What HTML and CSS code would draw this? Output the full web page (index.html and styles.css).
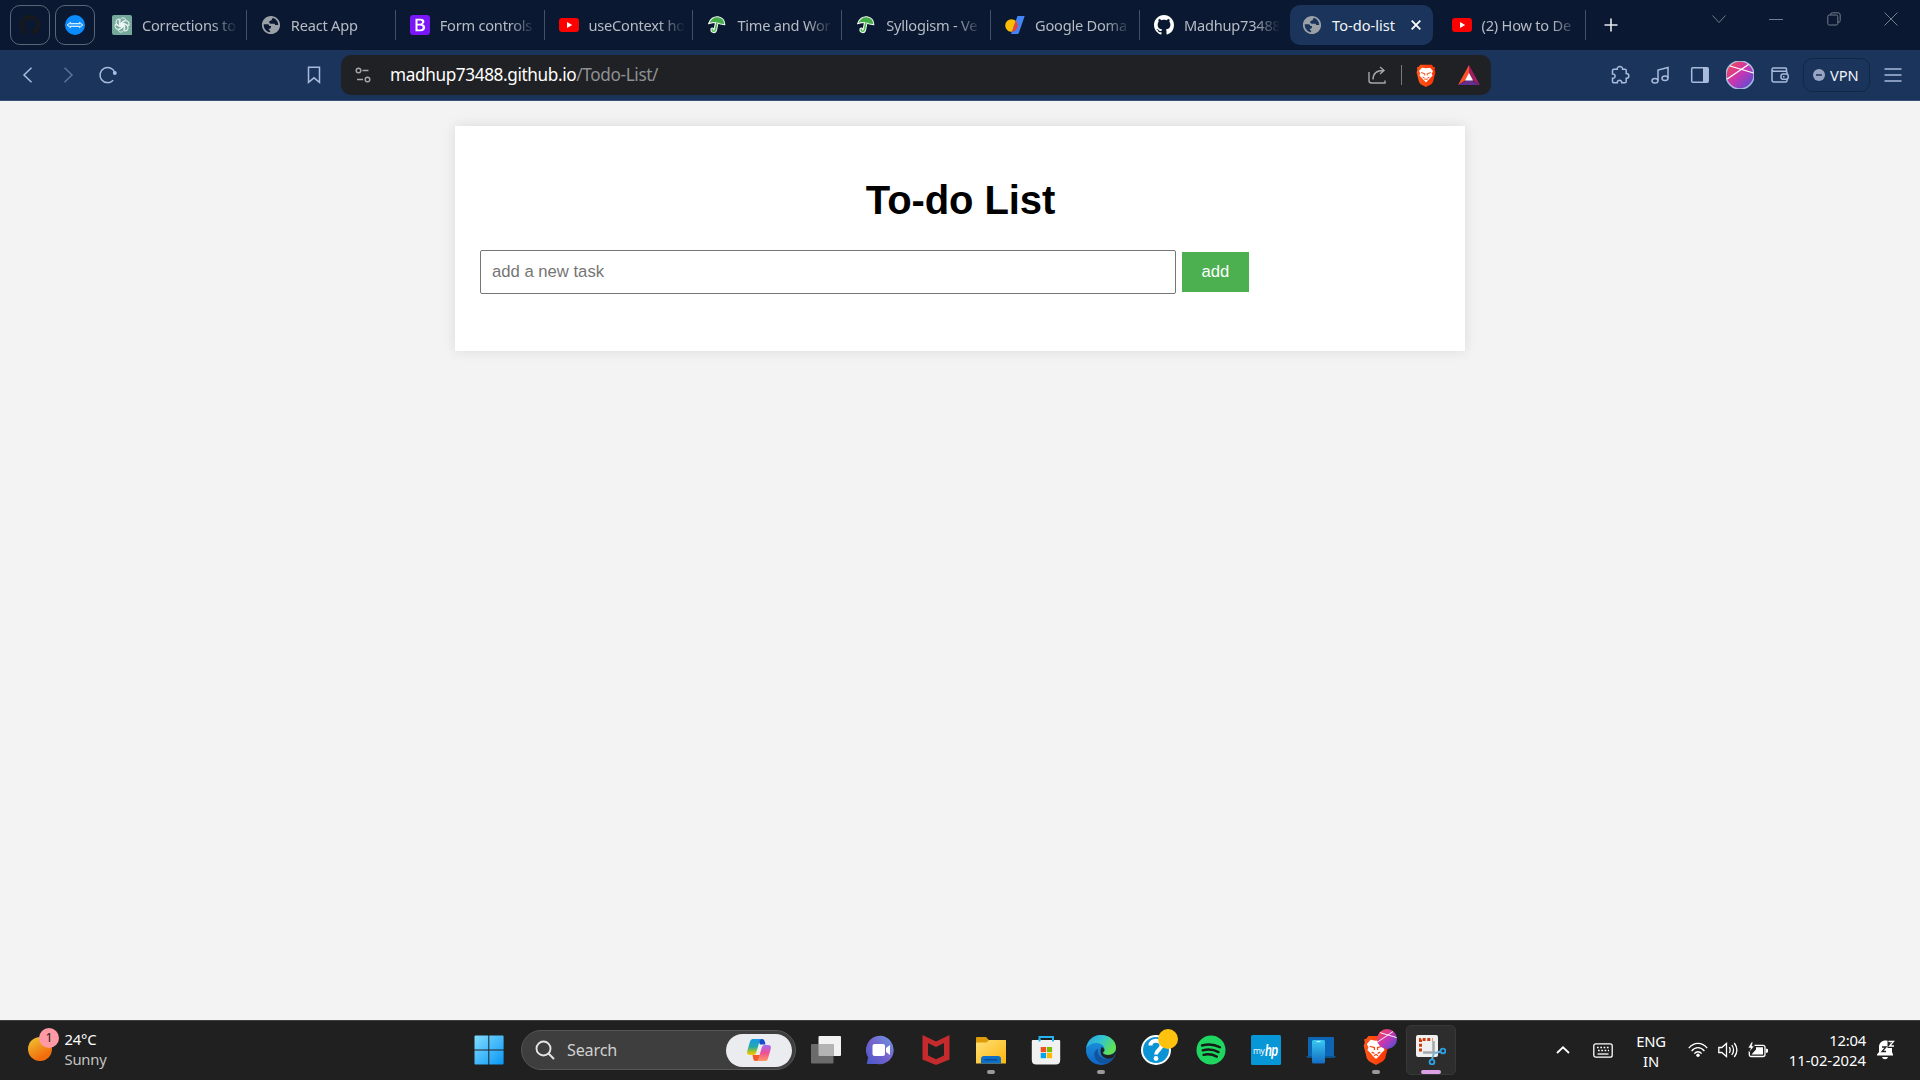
FILE: index.html
```html
<!DOCTYPE html>
<html lang="en">
<head>
<meta charset="utf-8">
<title>To-do-list</title>
<link rel="stylesheet" href="styles.css">
</head>
<body>
<svg class="defs" width="0" height="0">
  <defs>
    <linearGradient id="avatarFill" x1="0" y1="0" x2="1" y2="1"><stop offset="0" stop-color="#ff4a3d"/><stop offset=".5" stop-color="#c636b4"/><stop offset="1" stop-color="#3c55dc"/></linearGradient>
    <linearGradient id="braveFill" x1="0" y1="0" x2="1" y2="0"><stop offset="0" stop-color="#ff5a1c"/><stop offset="1" stop-color="#ff3000"/></linearGradient>
  </defs>
  <symbol id="github" viewBox="0 0 16 16"><path d="M8 0C3.58 0 0 3.58 0 8c0 3.54 2.29 6.53 5.47 7.59.4.07.55-.17.55-.38 0-.19-.01-.82-.01-1.49-2.01.37-2.53-.49-2.69-.94-.09-.23-.48-.94-.82-1.13-.28-.15-.68-.52-.01-.53.63-.01 1.08.58 1.23.82.72 1.21 1.87.87 2.33.66.07-.52.28-.87.51-1.07-1.78-.2-3.64-.89-3.64-3.95 0-.87.31-1.59.82-2.15-.08-.2-.36-1.02.08-2.12 0 0 .67-.21 2.2.82.64-.18 1.32-.27 2-.27s1.36.09 2 .27c1.53-1.04 2.2-.82 2.2-.82.44 1.1.16 1.92.08 2.12.51.56.82 1.27.82 2.15 0 3.07-1.87 3.75-3.65 3.95.29.25.54.73.54 1.48 0 1.07-.01 1.93-.01 2.2 0 .21.15.46.55.38A8.01 8.01 0 0 0 16 8c0-4.42-3.58-8-8-8z"/></symbol>
  <symbol id="globe" viewBox="1 1 22 22"><path fill="#9aa0a6" d="M12 2C6.48 2 2 6.48 2 12s4.48 10 10 10 10-4.48 10-10S17.520 2 12 2zm-1 17.930c-3.950-.49-7-3.850-7-7.930 0-.3.020-.6.060-.9H8c1.700 0 2 .9 2 1.900h2v1.500l-1 1.500H9.500c0 1.100.9 2 1.500 2v1.930zM20 12h-2.500c-.8 0-1.500-.6-1.500-1.500h-4c-1.500 0-2-.8-2-1.500 0-1.200.8-2 2-2 .8 0 1-.5 1-1.200 0-.9.500-1.500 1.500-1.600C17.700 5.400 20 8.400 20 12z"/></symbol>
  <symbol id="youtube" viewBox="0 0 20 20"><rect y="3" width="20" height="14" rx="3.200" fill="#f00"/><path d="M8 7l5.200 3L8 13z" fill="#fff"/></symbol>
  <symbol id="umbrella" viewBox="0 0 20 20"><path d="M9.800 7.500l-1.500 7.300c-.5 2.300-3.400 1.900-3.100-.5" fill="none" stroke="#f4f7f4" stroke-width="3.600" stroke-linecap="round"/><path d="M1.500 8.800C3 4 7 1.200 11 1.800c4 .6 6.700 3.600 6.800 8L13.500 9l-4-1.200-4-.2z" fill="#43ad48" stroke="#f4f7f4" stroke-width="1.100" stroke-linejoin="round"/><path d="M9.800 8l-1.500 6.800c-.5 2.300-3.400 1.900-3.100-.5" fill="none" stroke="#4db952" stroke-width="1.500" stroke-linecap="round"/></symbol>
  <symbol id="brave" viewBox="0 0 24 28"><path d="M5 1h14l2 2.500 2 .5-.5 3 1 3-3 12-2 2.500L12 28l-6.500-3.500-2-2.500-3-12 1-3L1 4l2-.5z" fill="url(#braveFill)"/><path d="M7 4.500l5 .8 5-.8 3.500 4-1.500 3.500 1 2-3.500 3.500-1 1.500L12 22.500 8.500 19l-1-1.500L4 14l1-2-1.500-3.500z" fill="#fff"/><path d="M6 10.500l4.500 1.200v2.300M18 10.500l-4.500 1.200v2.300M8 16l2.500 1.200M16 16l-2.500 1.200M10 19.300l2-1.200 2 1.200" fill="none" stroke="#fb4a16" stroke-width="1.200"/></symbol>
  <symbol id="profile" viewBox="0 0 28 28"><circle cx="14" cy="14" r="14" fill="url(#avatarFill)"/><path d="M1.200 18L22.500 3.500M4 5l23.500 7" stroke="#fff" stroke-width="1.300" fill="none"/></symbol>
</svg>

<header class="tabstrip">
  <div class="pin"><svg class="fav dark" viewBox="0 0 16 16"><use href="#github"/></svg></div>
  <div class="pin"><svg class="fav" viewBox="0 0 20 20"><circle cx="10" cy="10" r="10" fill="#0a8cff"/><path d="M2.200 10l3.300-2.700v1.300h9V7.300l3.300 2.700-3.300 2.700v-1.300h-9v1.300z" fill="#3ba3ff" stroke="#fff" stroke-width=".9"/></svg></div>
  <nav class="tabs">
    <div class="tab"><svg class="fav" viewBox="0 0 20 20"><path d="M2 0h16a2 2 0 0 1 2 2v18H2a2 2 0 0 1-2-2V2a2 2 0 0 1 2-2z" fill="#74a99b"/><g fill="none" stroke="#eef5f2" stroke-width="1"><path id="petal" d="M8 11.300V5.800c0-3 4.500-4 5.800-1.200L9.500 7.300v5"/><use href="#petal" transform="rotate(60 10 10)"/><use href="#petal" transform="rotate(120 10 10)"/><use href="#petal" transform="rotate(180 10 10)"/><use href="#petal" transform="rotate(240 10 10)"/><use href="#petal" transform="rotate(300 10 10)"/></g></svg><span class="label">Corrections to</span></div>
    <div class="tab"><svg class="fav"><use href="#globe"/></svg><span class="label">React App</span></div>
    <div class="tab"><svg class="fav" viewBox="0 0 20 20"><rect width="20" height="20" rx="3" fill="#7a16f8"/><path d="M5.500 3.700h5.200c2.400 0 3.700 1.100 3.700 2.900 0 1.400-.9 2.400-2.200 2.700 1.800.2 2.900 1.400 2.900 3.100 0 2.400-1.800 3.800-4.600 3.800h-5zm2 1.700V8.800h2.300c1.500 0 2.300-.6 2.300-1.700 0-1.200-.8-1.700-2.200-1.700zm0 5v4.100h2.600c1.700 0 2.600-.7 2.600-2s-.9-2.100-2.600-2.100z" fill="#fff"/></svg><span class="label">Form controls</span></div>
    <div class="tab"><svg class="fav"><use href="#youtube"/></svg><span class="label">useContext ho</span></div>
    <div class="tab"><svg class="fav"><use href="#umbrella"/></svg><span class="label">Time and Wor</span></div>
    <div class="tab"><svg class="fav"><use href="#umbrella"/></svg><span class="label">Syllogism - Ve</span></div>
    <div class="tab"><svg class="fav" viewBox="0 0 20 20"><circle cx="6.500" cy="10.500" r="6.300" fill="#fbbc04"/><path d="M12.500 1h7.200L14 17.500c-.4 1-1 1.500-2 1.500H6z" fill="#4285f4"/><path d="M10.600 5.800c3 2.400 2.900 7.300-.7 10.100-1 .5-1.800.8-2.800.8z" fill="#ea4335"/></svg><span class="label">Google Doma</span></div>
    <div class="tab plain"><svg class="fav light" viewBox="0 0 16 16"><use href="#github"/></svg><span class="label">Madhup73488</span></div>
    <div class="tab active"><svg class="fav"><use href="#globe"/></svg><span class="label">To-do-list</span><svg class="close" viewBox="0 0 10 10"><path d="M.7.7l8.600 8.600M9.300.7L.7 9.300"/></svg></div>
    <div class="tab"><svg class="fav"><use href="#youtube"/></svg><span class="label">(2) How to De</span></div>
  </nav>
  <svg class="newtab" viewBox="0 0 14 14"><path d="M7 .5v13M.5 7h13"/></svg>
  <div class="winctl">
    <svg viewBox="0 0 14 14"><path d="M.5 3.500L7 10.500l6.500-7"/></svg>
    <svg viewBox="0 0 14 14"><path d="M0 7.500h14"/></svg>
    <svg viewBox="0 0 14 14"><rect x=".8" y="3" width="10" height="10" rx="1.500"/><path d="M3.500 3V2.500Q3.500.8 5.500.8H11q2.200 0 2.200 2.200v5.500q0 2-2.400 2"/></svg>
    <svg viewBox="0 0 14 14"><path d="M.5.5l13 13M13.500.5l-13 13"/></svg>
  </div>
</header>

<div class="toolbar">
  <div class="tools nav">
    <span class="tool"><svg viewBox="0 0 20 20"><path d="M13.500 2.800L6 10l7.500 7.300"/></svg></span>
    <span class="tool faint"><svg viewBox="0 0 20 20"><path d="M6.500 2.800L14 10l-7.500 7.300"/></svg></span>
    <span class="tool"><svg viewBox="0 0 20 20"><path d="M15.200 15.200A7.600 7.600 0 1 1 16.800 7.500"/><circle cx="16.800" cy="8" r="2" class="solid"/></svg></span>
  </div>
  <span class="tool bookmark"><svg viewBox="0 0 20 20"><path d="M4.500 2.300h11v15L10 12.800l-5.500 4.500z"/></svg></span>
  <div class="address">
    <svg class="tune" viewBox="0 0 16 16"><circle cx="3.500" cy="3.500" r="2.300"/><path d="M7.500 3.500h6M2 12.500h6"/><circle cx="12.500" cy="12.500" r="2.300"/></svg>
    <span class="url">madhup73488.github.io<span class="path">/Todo-List/</span></span>
    <svg class="share" viewBox="0 0 18 18"><path d="M1 6v8.500Q1 17 3.500 17H17v-2.500M5 13.500C5 8 8 4.500 15.500 4.500M12 1l4 3.500L12 8"/></svg>
    <i class="divider"></i>
    <svg class="shield"><use href="#brave"/></svg>
    <svg class="bat" viewBox="0 0 22 20"><path d="M11 0L0 20l11-7z" fill="#ff5027"/><path d="M11 0l11 20-11-7z" fill="#9e1f63"/><path d="M0 20h22l-11-6z" fill="#662d91"/><path d="M11 8l4 7.500H7z" fill="#fff"/></svg>
  </div>
  <div class="tools ext">
    <span class="tool"><svg viewBox="0 0 20 20"><path d="M2.500 5.500q0-1.200 1.200-1.200h3.500c-.4-3.600 5.800-3.600 5.400 0H15q1.200 0 1.200 1.200v3c3.500 0 3.500 4.800 0 4.800v3.200q0 1.200-1.200 1.200h-3.300c.2-3.200-4.600-3.200-4.400 0H3.700q-1.200 0-1.200-1.200v-3.200c3.500.3 3.500-4.700 0-4.400z"/></svg></span>
    <span class="tool"><svg viewBox="0 0 20 20"><path d="M8 15.500V5l10-2.500V13"/><ellipse cx="5" cy="15.700" rx="3" ry="2.300"/><ellipse cx="15" cy="13.200" rx="3" ry="2.300"/></svg></span>
    <span class="tool"><svg viewBox="0 0 20 20"><rect x="1.700" y="2.700" width="16.500" height="14.600" rx="1"/><path d="M13 2.700h4.200q1 0 1 1v12.600q0 1-1 1H13z" class="solid"/></svg></span>
    <span class="tool"><svg class="avatar"><use href="#profile"/></svg></span>
    <span class="tool"><svg viewBox="0 0 20 20"><path d="M16.500 6V4q0-1-1-1h-12Q2 3 2 4.600V15q0 2 2 2h11.500q1.500 0 1.500-1.500V14M2 5q.3 1.300 1.800 1.300h12q1.200 0 1.200 1.300V9"/><rect x="11" y="9" width="7.200" height="5.300" rx="2"/><path d="M13 11.700h1.500"/></svg></span>
    <span class="vpn"><svg viewBox="0 0 12 12"><circle cx="6" cy="6" r="6" fill="#9ba3c2"/><path d="M3 6h6" stroke="#1a345c" stroke-width="1.500"/></svg>VPN</span>
    <span class="tool menu"><svg viewBox="0 0 20 20"><path d="M1.500 4h17M1.500 10h17M1.500 16h17"/></svg></span>
  </div>
</div>

<main class="page">
  <section class="card">
    <h1>To-do List</h1>
    <form class="entry"><input type="text" placeholder="add a new task"><button type="button">add</button></form>
  </section>
</main>

<footer class="taskbar">
  <div class="weather">
    <div class="sun"><span class="count">1</span></div>
    <div class="forecast"><span>24°C</span><span class="muted">Sunny</span></div>
  </div>
  <div class="apps">
    <span class="app"><svg viewBox="0 0 30 30"><defs><linearGradient id="win" x1="0" y1="0" x2="1" y2="1" ><stop offset="0" stop-color="#83ddff"/><stop offset="1" stop-color="#0796f5"/></linearGradient></defs><path d="M.5 1.500q0-.9.900-.9h12.900v13.900H.5zM15.300.6h13.300q1 0 1 1v12.900H15.300zM.5 15.500h13.800v14H1.500q-1 0-1-1zM15.300 15.500h14.300v13q0 1-1 1H15.300z" fill="url(#win)"/></svg></span>
    <div class="search">
      <svg class="lens" viewBox="0 0 20 20"><circle cx="8.500" cy="8.500" r="7"/><path d="M13.500 13.500l5 5"/></svg>
      <span>Search</span>
      <span class="copilot"><svg viewBox="0 0 24 22"><defs><linearGradient id="cpA" x1="0" y1="0" x2="0" y2="1"><stop offset="0" stop-color="#1899e5"/><stop offset=".5" stop-color="#22aaaa"/><stop offset=".8" stop-color="#b3c51d"/><stop offset="1" stop-color="#ffc400"/></linearGradient><linearGradient id="cpB" x1="0" y1="0" x2="0" y2="1"><stop offset="0" stop-color="#a56bf0"/><stop offset=".5" stop-color="#ef5096"/><stop offset="1" stop-color="#ff985e"/></linearGradient></defs><path d="M11 0h4q2 0 2.600 2l.9 3.500H13z" fill="#154bd0"/><path d="M7 22h4l2-6H5.500l.8 4q.3 2 2.200 2z" fill="#f25a28"/><path d="M5.500 0H15q-1.700 0-2.300 2L9 14q-.6 2-2.500 2H3Q-.7 16 .3 12L3 2.500Q3.600 0 5.500 0z" fill="url(#cpA)"/><path d="M18.500 22H9q1.700 0 2.300-2L15 8q.6-2 2.500-2H21q3.700 0 2.700 4L21 19.500q-.6 2.500-2.500 2.500z" fill="url(#cpB)"/></svg></span>
    </div>
    <span class="app"><svg viewBox="0 0 30 30"><rect x="7.500" y="1" width="22.500" height="20" rx="1" fill="#f2f2f2"/><rect y="9" width="22.500" height="19.500" rx="1" fill="#6b6b6b"/><path d="M7.500 9h15v12h-14q-1 0-1-1z" fill="#b4b4b4"/></svg></span>
    <span class="app"><svg viewBox="0 0 30 30"><defs><linearGradient id="chat" x1="0" y1="1" x2="1" y2="0"><stop offset="0" stop-color="#4a57cc"/><stop offset=".5" stop-color="#7563cc"/><stop offset="1" stop-color="#6b9ae5"/></linearGradient></defs><path d="M15 .8a14.200 14.200 0 1 1-4 28.100H1.500q-1-.2-.6-1.200l1.300-5.200A14.200 14.200 0 0 1 15 .8z" fill="url(#chat)"/><rect x="6.500" y="9" width="12.500" height="12" rx="2" fill="#fff"/><path d="M20 13l4-3v10l-4-3z" fill="#fff"/></svg></span>
    <span class="app"><svg viewBox="0 0 30 30"><path d="M1.500 0L15 6.500 28.500 0v24.500L15 30 1.500 24.500zM7 8v12.500l8 3.700 8-3.700V8l-8 4z" fill="#c52b2c" fill-rule="evenodd"/></svg></span>
    <span class="app running"><svg viewBox="0 0 30 30"><defs><linearGradient id="fold" x1="0" y1="0" x2="1" y2="1"><stop offset="0" stop-color="#ffe078"/><stop offset="1" stop-color="#fcb60d"/></linearGradient></defs><path d="M0 3q0-1 1-1h9l3 3h16q1 0 1 1v7H0z" fill="#dd9c08"/><path d="M0 8.500q0-1 1-1h9.500L13 5h16q1 0 1 1v22.500H0z" fill="url(#fold)"/><path d="M5 28.500V24q0-3 3-3h14q3 0 3 3v4.500z" fill="#0d6fc7"/><path d="M8.500 24.800h13" stroke="#07468c" stroke-width="1.200"/></svg></span>
    <span class="app"><svg viewBox="0 0 30 30"><path d="M8.500 6.500V2h13.500v4.500" fill="none" stroke="#25b2ef" stroke-width="2"/><path d="M.8 6q0-1 1-1h26.400q1 0 1 1v19q0 4.500-4.500 4.500H5.300Q.8 29.500.8 25z" fill="#f1f1f1"/><path d="M8.500 4v2.500M22 4v2.500" stroke="#25b2ef" stroke-width="2"/><path d="M9.700 12h5.300v5.200H9.700z" fill="#f25022"/><path d="M15.800 12h5.300v5.200h-5.300z" fill="#7fba00"/><path d="M9.700 18H15v5.200H9.700z" fill="#00a4ef"/><path d="M15.800 18h5.300v5.200h-5.300z" fill="#ffb900"/></svg></span>
    <span class="app running"><svg viewBox="0 0 30 30"><defs><linearGradient id="edA" x1="0" y1="0" x2="1" y2=".5"><stop offset="0" stop-color="#2a9fe2"/><stop offset=".5" stop-color="#31c4d0"/><stop offset="1" stop-color="#62e251"/></linearGradient><linearGradient id="edB" x1="0" y1="0" x2="0" y2="1"><stop offset="0" stop-color="#1c9be2"/><stop offset="1" stop-color="#0d65c4"/></linearGradient></defs><circle cx="15" cy="15" r="15" fill="url(#edB)"/><path d="M.2 13C1.500 5 7.500 0 15 0c8.300 0 15 5.500 15 12.500 0 4.500-3.500 7.500-8 7.500-3 0-5-.9-5-2.200 0-1 1.500-1.300 1.500-3.800C18.500 10.500 14.500 8 10 8 6 8 2.500 10 .2 13z" fill="url(#edA)"/><path d="M12 13.500c-5 2.700-5 9 0 13 4.500 3.600 11 2.500 15-3.500-6 3-13.500 1-15-5-.3-1.500-.3-3 0-4.500z" fill="#13529c"/><path d="M15.500 12c2.500 1 3 2.500 3 3.500-.3 1.500-1.500 1.300-1.500 2.300 0 1.500 3 2.200 5 2.200 3.500 0 6.500-1.500 7.600-4.500l.4 2.500-3 5c-5 2-10.500 0-12-4-.7-2.500-.5-5 .5-7z" fill="#222"/><path d="M27 23c-3 2.500-8.500 2.600-11.800-1l-2 .5 1 5 7 1z" fill="#13529c"/></svg></span>
    <span class="app"><svg viewBox="0 0 30 30"><circle cx="15" cy="15" r="14" fill="#0b94d4" stroke="#fff" stroke-width="2"/><path d="M9.500 10.500c0-6.500 11-6.500 11 0 0 4-5.500 4.500-5.500 9" fill="none" stroke="#fff" stroke-width="4"/><circle cx="15" cy="23.500" r="2.400" fill="#fff"/></svg><i class="dot"></i></span>
    <span class="app"><svg viewBox="0 0 30 30"><circle cx="15" cy="15" r="14.500" fill="#1fd760"/><path d="M6 10.500c6-1.700 12.500-1.200 18 1.700M6.700 15.300c5.500-1.400 11-.8 15.800 1.800M7.500 19.800c4.500-1 9-.5 13.300 1.800" fill="none" stroke="#161b18" stroke-width="2.400" stroke-linecap="round"/></svg></span>
    <span class="app"><svg viewBox="0 0 30 30"><rect width="30" height="30" rx="1.500" fill="#0796d6"/><text x="2" y="18.500" class="my">my</text><text x="0" y="0" class="hp" transform="translate(14 21) scale(.8 1.150)">hp</text></svg></span>
    <span class="app"><svg viewBox="0 0 30 30"><rect x="2" y="2" width="26" height="19" rx="1" fill="#0d66b5"/><path d="M0 21h30l-1.500 2h-27z" fill="#0b548e"/><defs><linearGradient id="ph" x1="0" y1="0" x2="0" y2="1"><stop offset="0" stop-color="#38c9f3"/><stop offset="1" stop-color="#146cc2"/></linearGradient></defs><rect x="6" y="5" width="13" height="23.500" rx="1.500" fill="url(#ph)"/><path d="M10.500 6.700h4" stroke="#d8f8ff"/></svg></span>
    <span class="app running"><svg class="lion" viewBox="0 0 24 28"><use href="#brave"/></svg><svg class="mini"><use href="#profile"/></svg></span>
    <span class="app current"><svg viewBox="0 0 30 30"><rect width="22" height="22" rx="2" fill="#f0f0f0"/><path d="M4.500 16.500v-12h12" fill="none" stroke="#c93c0b" stroke-width="3" stroke-dasharray="3 1.700"/><path d="M17.500 6v12M7 17.500h12" stroke="#a3a8ab" stroke-width="2.500"/><path d="M18 18l-2 6.500M19 18l6-1.500" stroke="#6cb2d9" stroke-width="2"/><circle cx="16" cy="27" r="2.400" fill="none" stroke="#2ba1e2" stroke-width="1.900"/><circle cx="27" cy="16" r="2.400" fill="none" stroke="#2ba1e2" stroke-width="1.900"/></svg></span>
  </div>
  <div class="tray">
    <svg class="up" viewBox="0 0 14 8"><path d="M1 7l6-5.700L13 7"/></svg>
    <svg class="kbd" viewBox="0 0 20 15"><rect x=".8" y=".8" width="18.400" height="13.400" rx="2"/><path d="M4 4.500h12.500M5 7.500h11" stroke-dasharray="1.700 1.600"/><path d="M4.500 11h11"/></svg>
    <span class="lang">ENG<br>IN</span>
    <div class="status">
      <svg viewBox="0 0 20 16"><path d="M.8 6.200C6-.2 14-.2 19.200 6.200M3.600 9c3.600-4.500 9.200-4.500 12.800 0M6.300 11.600c2.200-2.500 5.200-2.500 7.400 0"/><circle cx="10" cy="13.300" r="1.700" class="fill"/></svg>
      <svg viewBox="0 0 20 16"><path d="M.8 5.500h3L8.500 1.500v13L3.800 10.500h-3zM11.300 5.200q1.800 2.800 0 5.600M13.800 3q3.500 5 0 10M16.300 1q5.200 7 0 14"/></svg>
      <svg viewBox="0 0 20 16"><path d="M6.500 3.300H15q2 0 2 2v7.200q0 2-2 2H3.300q-2 0-2-2V9"/><path d="M8 5.300h7v7.200H3.500l4.500-5z" class="fill"/><path d="M18 6.500l2 .8v3l-2 .8z" class="fill"/><path d="M3.500 0L0 6h2.500L1.500 10 6.300 4H4L5 0z" class="fill edge"/></svg>
    </div>
    <div class="clock"><span>12:04</span><span class="date">11-02-2024</span></div>
    <svg class="bell" viewBox="0 0 18 20"><path d="M0 14.500l2-2.500V7c0-4 3-6.500 6.500-6.500 4 0 6.500 2.500 6.500 6.500v5l1 2.500v1H0z" class="fill"/><path d="M5 17h6q-.5 2.300-3 2.300T5 17z" class="fill"/><path d="M5 7h4l-4 4.500h4" class="zed"/><path d="M10.500 0v8H18" class="zed gap"/><path d="M11.500 1.300h5L12.500 6H17"/></svg>
  </div>
</footer>
</body>
</html>
```
FILE: styles.css
```css
* { box-sizing: border-box; }
body {
  margin: 0;
  width: 1920px;
  height: 1080px;
  display: flex;
  flex-direction: column;
  overflow: hidden;
  background: #f3f3f3;
  font-family: "Noto Sans", "Open Sans", sans-serif;
}
svg { display: block; flex: none; }
.defs { position: absolute; }

/* Tab strip */
.tabstrip {
  height: 50px;
  flex: none;
  display: flex;
  align-items: center;
  background: #0a1931;
  padding-left: 10px;
}
.pin {
  width: 40px;
  height: 40px;
  margin-right: 5px;
  border: 1px solid #5a6577;
  border-radius: 10px;
  display: flex;
  align-items: center;
  justify-content: center;
}
.fav { width: 20px; height: 20px; }
.dark { fill: #17191d; }
.light { fill: #fff; }
.tabs { display: flex; margin-left: -2px; }
.tab {
  position: relative;
  width: 148.85px;
  height: 40px;
  padding: 0 10px 0 14px;
  display: flex;
  align-items: center;
  gap: 10px;
  color: #b6bbc4;
  font-size: 14.6px;
  letter-spacing: -.22px;
}
.tab::after {
  content: "";
  position: absolute;
  right: 0;
  top: 5px;
  width: 1px;
  height: 30px;
  background: #445066;
}
.tab.plain::after, .tab.active::after { display: none; }
.label {
  width: 97px;
  flex: none;
  white-space: nowrap;
  line-height: 24px;
  -webkit-mask-image: linear-gradient(90deg, #000 70px, transparent 96px);
  mask-image: linear-gradient(90deg, #000 70px, transparent 96px);
}
.active {
  width: 143px;
  margin: 0 4.5px 0 1.3px;
  padding: 0 12px;
  background: #1a345b;
  border-radius: 10px;
  color: #f3f5f8;
  letter-spacing: 0;
}
.active .label { width: auto; mask-image: none; -webkit-mask-image: none; }
.close { width: 10px; height: 10px; margin-left: auto; stroke: #fff; stroke-width: 1.8; }
.newtab { width: 14px; height: 14px; margin-left: 18px; stroke: #e6e9ee; stroke-width: 1.6; }
.winctl {
  display: flex;
  gap: 43.5px;
  margin: 0 22px 13px auto;
}
.winctl svg { width: 14px; height: 14px; fill: none; stroke: #737c8a; stroke-width: 1; }

/* Toolbar */
.toolbar {
  height: 51px;
  flex: none;
  display: flex;
  align-items: center;
  padding-left: 8px;
  background: #1a345b;
  border-bottom: 1px solid #37527a;
}
.tools { display: flex; align-items: center; }
.tool { width: 40px; height: 40px; display: flex; align-items: center; justify-content: center; }
.tool svg { width: 20px; height: 20px; fill: none; stroke: #a9bbdc; stroke-width: 1.5; }
.tool .solid { fill: #a9bbdc; stroke: none; }
.faint svg { stroke: #5c7398; }
.tool svg.avatar { width: 28px; height: 28px; }
.bookmark { margin-left: 166px; }
.address {
  width: 1150px;
  height: 40px;
  margin-left: 7px;
  padding: 0 11px 0 14px;
  display: flex;
  align-items: center;
  background: #202124;
  border-radius: 10px;
}
.tune { width: 16px; height: 16px; fill: none; stroke: #a5a7aa; stroke-width: 1.4; }
.url { margin-left: 19px; font-size: 17.2px; letter-spacing: -.38px; color: #fff; line-height: 24px; }
.path { color: #8e9194; }
.share { width: 18px; height: 18px; margin-left: auto; fill: none; stroke: #a5a7aa; stroke-width: 1.4; }
.divider { width: 1px; height: 20px; margin: 0 14px 0 15px; background: #77797d; }
.shield { width: 20px; height: 23px; margin-right: 22px; }
.bat { width: 22px; height: 20px; }
.ext { margin-left: 109px; }
.vpn {
  width: 67px;
  height: 34px;
  margin: 0 3px;
  display: flex;
  align-items: center;
  gap: 5px;
  padding-left: 9px;
  border: 1px solid #122746;
  border-radius: 9px;
  color: #f1f4f8;
  font-size: 14.6px;
}
.vpn svg { width: 12px; height: 12px; }

/* To-do page */
.page { flex: 1; padding-top: 25px; }
.card {
  width: 1010px;
  height: 225px;
  margin: 0 auto;
  padding: 25px;
  background: #fff;
  box-shadow: 0 0 12.5px rgba(0, 0, 0, .1);
  font-family: "Liberation Sans", Arial, sans-serif;
}
.card h1 { margin: 26px 0 27px; padding-left: 1px; font-size: 40px; letter-spacing: -.1px; line-height: 46px; text-align: center; }
.entry { display: flex; align-items: center; gap: 6px; }
.entry input {
  width: 696px;
  height: 44px;
  padding: 0 11px;
  border: 1px solid #767676;
  border-radius: 2px;
  background: #fff;
  font: 16.67px "Liberation Sans", Arial, sans-serif;
}
.entry input::placeholder { color: #757575; }
.entry button {
  width: 67px;
  height: 40px;
  padding: 0;
  border: 0;
  background: #4caf50;
  color: #fff;
  font: 16.67px "Liberation Sans", Arial, sans-serif;
}

/* Taskbar */
.taskbar {
  height: 60px;
  flex: none;
  display: flex;
  background: #202020;
  border-top: 1px solid #3b3e40;
  color: #fff;
  font-size: 14.8px;
  letter-spacing: -.2px;
}
.weather { width: 461.5px; display: flex; padding-left: 28px; }
.sun {
  position: relative;
  width: 24px;
  height: 24px;
  margin-top: 16px;
  border-radius: 50%;
  background: linear-gradient(150deg, #efb52d 15%, #f26d0c 75%);
}
.count {
  position: absolute;
  left: 11px;
  top: -9px;
  width: 20px;
  height: 20px;
  border-radius: 50%;
  background: #ff99a4;
  color: #222;
  font-size: 12.5px;
  line-height: 20px;
  text-align: center;
}
.forecast { display: flex; flex-direction: column; margin: 8px 0 0 12.5px; line-height: 20px; }
.muted { color: #c3c3c3; }
.apps { display: flex; align-items: center; height: 58px; }
.app { position: relative; width: 55px; height: 50px; display: flex; align-items: center; justify-content: center; }
.app svg { width: 30px; height: 30px; }
.app svg.lion { width: 26px; height: 30px; }
.app svg.mini { position: absolute; left: 28px; top: 4px; width: 20px; height: 20px; }
.running::after {
  content: "";
  position: absolute;
  left: 23.5px;
  bottom: 1px;
  width: 8px;
  height: 4px;
  border-radius: 2px;
  background: #9a9a9a;
}
.dot { position: absolute; left: 29px; top: 4px; width: 20px; height: 20px; border-radius: 50%; background: #ffc20e; }
.current { width: 50px; margin-left: 2.5px; background: #2d2d2d; border: 1px solid #383838; border-radius: 5px; }
.current::after {
  content: "";
  position: absolute;
  left: 14px;
  bottom: 0;
  width: 20px;
  height: 4px;
  border-radius: 2px;
  background: #dd9fe3;
}
.my { font: 8.5px "Open Sans", sans-serif; fill: #fff; letter-spacing: -.3px; }
.hp { font: italic bold 14px "Liberation Sans", Arial, sans-serif; fill: #fff; letter-spacing: -.8px; }
.search {
  width: 275px;
  height: 40px;
  margin: 0 2.5px 0 4.5px;
  padding: 0 3px 0 13px;
  display: flex;
  align-items: center;
  gap: 12px;
  border: 1px solid #555;
  border-radius: 20px;
  background: #3e3e3e;
  color: #d0d0d0;
  font-size: 16.2px;
}
.lens { width: 20px; height: 20px; fill: none; stroke: #e4e4e4; stroke-width: 1.9; stroke-linecap: round; }
.copilot {
  width: 66px;
  height: 33px;
  margin-left: auto;
  display: flex;
  align-items: center;
  justify-content: center;
  border-radius: 17px;
  background: #ebecef;
}
.copilot svg { width: 24px; height: 22px; }
.tray { display: flex; align-items: center; margin-left: auto; padding-right: 25px; height: 58px; }
.tray svg { fill: none; stroke: #fff; stroke-width: 1.3; }
.tray .fill { fill: #fff; stroke: none; }
.tray .edge { stroke: #202020; stroke-width: .6; }
.tray .up { width: 14px; height: 8px; stroke-width: 1.8; }
.tray .kbd { width: 20px; height: 15px; margin-left: 23px; }
.lang { width: 40px; margin-left: 18px; text-align: center; line-height: 20px; padding-top: 2px; }
.status { display: flex; gap: 10px; margin-left: 17px; }
.status svg { width: 20px; height: 16px; }
.clock { width: 98px; display: flex; flex-direction: column; align-items: flex-end; line-height: 20px; }
.date { letter-spacing: 0; }
.bell { width: 18px; height: 20px; margin-left: 11px; }
.tray .zed { stroke: #202020; }
.tray .gap { fill: #202020; stroke: none; }
```
